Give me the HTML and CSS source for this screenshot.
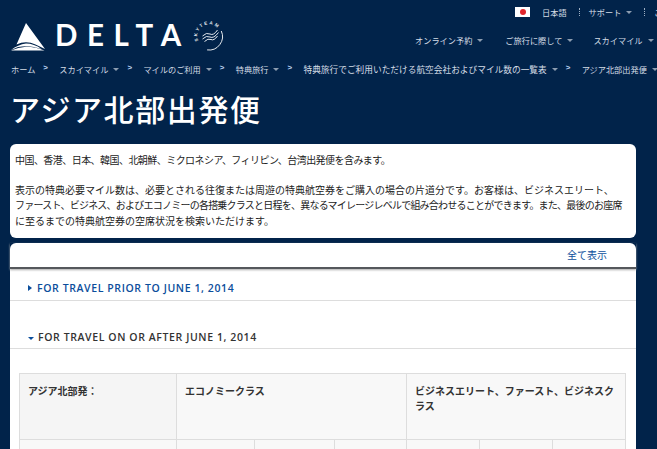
FILE: index.html
```html
<!DOCTYPE html>
<html lang="ja">
<head>
<meta charset="utf-8">
<title>アジア北部出発便</title>
<link rel="stylesheet" href="styles.css">
</head>
<body>
<header class="site-header">
  <div class="util">
    <span class="flag"><span class="flag-dot"></span></span>
    <a class="util-lang">日本語</a>
    <span class="util-sep"></span>
    <a class="util-item">サポート<i class="caret"></i></a>
    <span class="util-sep"></span>
    <a class="util-item">ご</a>
  </div>
  <div class="brand">
    <svg class="logo" width="215" height="36" viewBox="0 0 215 36" aria-label="Delta SkyTeam">
      <path d="M16 2 L35 28 L25.500 23.500 Q16 19 6.500 23.500 Z M16 22.500 Q24 22.500 31.500 28 L24 26 Q16 24.500 8 26 L1 29 Q8 23.500 16 22.500 Z M1 29.500 Q8 26.500 16 25.800 Q26 26 34.500 29.500 Z" fill="#fff"/>
      <text class="logo-word" x="45" y="25">DELTA</text>
      <path id="team-arc" d="M188.500 20 A 11.500 11.500 0 0 1 209.500 10" fill="none"/>
      <text class="logo-team"><textPath href="#team-arc">SKYTEAM</textPath></text>
      <path d="M211.300 10 A13.500 13.500 0 0 1 197.100 28.900" fill="none" stroke="#fff" stroke-width=".9"/>
      <path d="M192.500 15 Q196.500 11 200 13 T207.500 9 M192.500 18 Q196.500 14 200 16 T208.500 11.500 M194.500 20.500 Q198 17 201 18.500 T207.500 15" fill="none" stroke="#e4e9ef" stroke-width="1"/>
    </svg>
    <nav class="main-nav">
      <a class="nav-one">オンライン予約<i class="caret"></i></a>
      <a class="nav-two">ご旅行に際して<i class="caret"></i></a>
      <a class="nav-three">スカイマイル<i class="caret"></i></a>
    </nav>
  </div>
  <nav class="crumbs">
    <a>ホーム</a><b class="crumb-sep">&gt;</b>
    <a>スカイマイル<i class="caret"></i></a><b class="crumb-sep">&gt;</b>
    <a>マイルのご利用<i class="caret"></i></a><b class="crumb-sep">&gt;</b>
    <a>特典旅行<i class="caret"></i></a><b class="crumb-sep">&gt;</b>
    <a class="crumb-long">特典旅行でご利用いただける航空会社およびマイル数の一覧表<i class="caret"></i></a><b class="crumb-sep">&gt;</b>
    <a>アジア北部出発便<i class="caret"></i></a>
  </nav>
</header>
<main class="content">
  <h1 class="title">アジア北部出発便</h1>
  <section class="card intro">
    <p class="intro-lead">中国、香港、日本、韓国、北朝鮮、ミクロネシア、フィリピン、台湾出発便を含みます。</p>
    <p><span class="line">表示の特典必要マイル数は、必要とされる往復または周遊の特典航空券をご購入の場合の片道分です。お客様は、ビジネスエリート、</span><span class="line line-tight">ファースト、ビジネス、およびエコノミーの各搭乗クラスと日程を、異なるマイレージレベルで組み合わせることができます。また、最後のお座席</span><span class="line">に至るまでの特典航空券の空席状況を検索いただけます。</span></p>
  </section>
  <section class="card panel">
    <div class="toolbar"><a class="show-all">全て表示</a></div>
    <h2 class="sec sec-closed"><i class="tri-right"></i>FOR TRAVEL PRIOR TO JUNE 1, 2014</h2>
    <h2 class="sec sec-open"><i class="tri-down"></i>FOR TRAVEL ON OR AFTER JUNE 1, 2014</h2>
    <table class="awards">
      <colgroup>
        <col class="c1"><col class="c2"><col class="c3"><col class="c4"><col class="c5"><col class="c6"><col class="c7">
      </colgroup>
      <tr class="head">
        <th>アジア北部発：</th>
        <th colspan="3">エコノミークラス</th>
        <th colspan="3">ビジネスエリート、ファースト、ビジネスクラス</th>
      </tr>
      <tr class="sub">
        <td></td><td></td><td></td><td></td><td></td><td></td><td></td>
      </tr>
    </table>
  </section>
</main>
</body>
</html>
```
FILE: styles.css
```css
html, body {
  margin: 0;
  padding: 0;
  height: 449px;
  overflow: hidden;
  background: #01234a;
  font-family: "Noto Sans CJK JP", "Liberation Sans", sans-serif;
}
.site-header {
  height: 83px;
  color: #d5dde6;
  font-size: 8.2px;
  white-space: nowrap;
}
.util {
  display: flex;
  align-items: center;
  height: 19px;
  padding: 2px 0 0 515px;
}
.flag {
  display: flex;
  flex: none;
  align-items: center;
  justify-content: center;
  width: 15px;
  height: 10px;
  background: #fff;
}
.flag-dot {
  width: 6px;
  height: 6px;
  border-radius: 50%;
  background: #e0262c;
}
.util-lang { flex: none; margin-left: 12px; }
.util-sep {
  flex: none;
  width: 0;
  height: 8px;
  margin: 0 9px 0 12px;
  border-left: 1px dotted #9fb0c3;
}
.util-item { flex: none; }
.caret {
  display: inline-block;
  width: 0;
  height: 0;
  margin-left: 5px;
  vertical-align: 2px;
  border-left: 3px solid transparent;
  border-right: 3px solid transparent;
  border-top: 3px solid #8d9db0;
}
.brand {
  display: flex;
  height: 36px;
}
.logo {
  flex: none;
  width: 215px;
  margin-left: 10px;
  overflow: visible;
}
.logo-word {
  font-family: "Lato", "Liberation Sans", sans-serif;
  font-size: 29.5px;
  font-weight: 700;
  letter-spacing: 9.5px;
  fill: #fff;
}
.logo-team {
  font-family: "Liberation Sans", sans-serif;
  font-size: 4.5px;
  font-weight: 700;
  letter-spacing: 1.7px;
  fill: #e6ebf1;
}
.main-nav {
  display: flex;
  flex: none;
  align-items: center;
  padding: 2px 0 0 190px;
}
.nav-two { margin-left: 22px; }
.nav-three { margin-left: 20px; }
.crumbs {
  display: flex;
  align-items: center;
  height: 14px;
  margin-top: 5px;
  padding-left: 11px;
}
.crumbs a { flex: none; }
.crumbs .crumb-long { font-size: 8.7px; }
.crumb-sep {
  flex: none;
  margin: -3px 11.3px 0 8px;
  color: #bcd4f2;
  font-family: "Liberation Sans", sans-serif;
  font-size: 8px;
}
.content {
  padding: 0 21px 0 10px;
}
.title {
  margin: 0;
  padding: 3px 0 0;
  height: 61px;
  box-sizing: border-box;
  color: #fff;
  font-size: 30px;
  font-weight: 500;
  line-height: 44px;
  letter-spacing: 1.6px;
}
.card {
  background: #fff;
  border-radius: 6px;
}
.intro {
  box-sizing: border-box;
  height: 94px;
  padding: 8px 6px 0 5px;
  color: #222;
  font-size: 10px;
  line-height: 15.5px;
  white-space: nowrap;
}
.intro p { margin: 0; }
.intro .intro-lead { margin-bottom: 14px; letter-spacing: -.55px; }
.line { display: block; }
.line-tight { letter-spacing: -.77px; }
.panel {
  height: 300px;
  margin-top: 5px;
  border-radius: 6px 6px 0 0;
}
.toolbar {
  box-sizing: border-box;
  height: 26px;
  padding: 2px 29px 0 0;
  text-align: right;
  border-bottom: 2px solid #55585c;
  box-shadow: 0 1px 2px #aaa;
  line-height: 15px;
}
.show-all {
  color: #0b4e9c;
  font-size: 10px;
}
.sec {
  box-sizing: border-box;
  margin: 0;
  padding-left: 18px;
  display: flex;
  align-items: center;
  border-bottom: 1px solid #ddd;
  font-family: "Open Sans", sans-serif;
  font-size: 10.5px;
  font-weight: 600;
  letter-spacing: .6px;
}
.sec-closed {
  height: 32px;
  padding-top: 7px;
  color: #0b4e9c;
}
.sec-open {
  height: 48px;
  padding-top: 30px;
  padding-bottom: 6px;
  color: #333;
}
.tri-right {
  margin-right: 5px;
  border-top: 3px solid transparent;
  border-bottom: 3px solid transparent;
  border-left: 4px solid #0b4e9c;
}
.tri-down {
  margin: 3px 4px 0 0;
  border-left: 3px solid transparent;
  border-right: 3px solid transparent;
  border-top: 3px solid #0b4e9c;
}
.awards {
  width: 606px;
  margin: 24px 0 0 9px;
  table-layout: fixed;
  border-collapse: collapse;
  background: #f8f8f8;
  color: #333;
  font-size: 10px;
  line-height: 15px;
}
.awards th, .awards td {
  border: 1px solid #ddd;
  vertical-align: top;
  text-align: left;
}
.awards th {
  height: 66px;
  box-sizing: border-box;
  padding: 9px 8px;
  font-weight: 700;
}
.awards th:first-child { background: #f5f5f5; }
.awards td { height: 60px; }
.c1 { width: 157px; }
.c2 { width: 78px; }
.c3 { width: 80px; }
.c4 { width: 72px; }
.c5 { width: 73px; }
.c6 { width: 73px; }
.c7 { width: 73px; }
```
